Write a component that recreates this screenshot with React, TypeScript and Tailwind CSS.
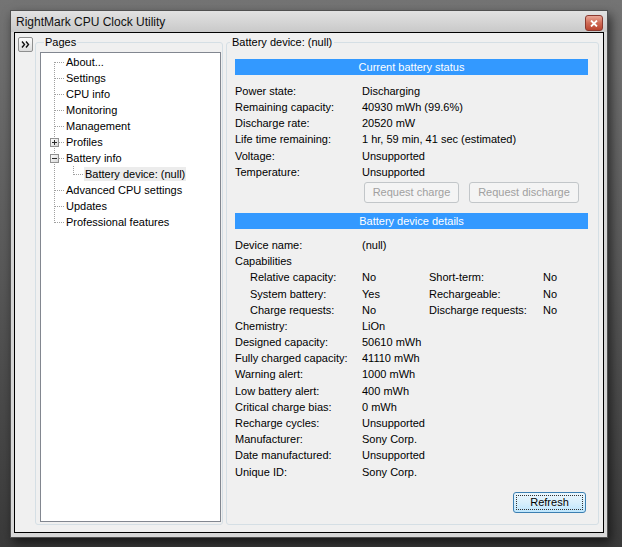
import React from "react";

type V = "full" | "top" | "bottom" | "none";

function Conn({ v, h, box }: { v: V; h: boolean; box?: "+" | "-" }) {
  const y1 = v === "bottom" ? 8 : 0;
  const y2 = v === "top" ? 9 : 16;
  return (
    <svg width="19" height="16" className="shrink-0 block">
      <defs>
        <linearGradient id="bx" x1="0" y1="0" x2="1" y2="1">
          <stop offset="0" stopColor="#ffffff" />
          <stop offset="1" stopColor="#d6d6d6" />
        </linearGradient>
      </defs>
      {v !== "none" && (
        <line x1="9.5" y1={y1} x2="9.5" y2={y2} stroke="#a0a0a0" strokeDasharray="1 1" />
      )}
      {h && <line x1={box ? 14 : 10} y1="8.5" x2="19" y2="8.5" stroke="#a0a0a0" strokeDasharray="1 1" />}
      {box && (
        <g>
          <rect x="5.5" y="4.5" width="8" height="8" fill="url(#bx)" stroke="#919191" />
          <line x1="7" y1="8.5" x2="12" y2="8.5" stroke="#2b2b2b" />
          {box === "+" && <line x1="9.5" y1="6" x2="9.5" y2="11" stroke="#2b2b2b" />}
        </g>
      )}
    </svg>
  );
}

type TreeItem = { text: string; v: V; box?: "+" | "-"; child?: boolean; selected?: boolean };

const tree: TreeItem[] = [
  { text: "About...", v: "bottom" },
  { text: "Settings", v: "full" },
  { text: "CPU info", v: "full" },
  { text: "Monitoring", v: "full" },
  { text: "Management", v: "full" },
  { text: "Profiles", v: "full", box: "+" },
  { text: "Battery info", v: "full", box: "-" },
  { text: "Battery device: (null)", v: "full", child: true, selected: true },
  { text: "Advanced CPU settings", v: "full" },
  { text: "Updates", v: "full" },
  { text: "Professional features", v: "top" },
];

function Row({ label, value }: { label: string; value: string }) {
  return (
    <div className="flex h-[16.2px] items-center">
      <span className="w-[127px] shrink-0">{label}</span>
      <span>{value}</span>
    </div>
  );
}

function CapRow({ a, av, b, bv }: { a: string; av: string; b: string; bv: string }) {
  return (
    <div className="flex h-[16.2px] items-center">
      <span className="w-[127px] shrink-0 pl-[15px]">{a}</span>
      <span className="w-[67px] shrink-0">{av}</span>
      <span className="w-[114px] shrink-0">{b}</span>
      <span>{bv}</span>
    </div>
  );
}

function Bar({ children }: { children: React.ReactNode }) {
  return (
    <div className="h-[16px] bg-[#3399ff] text-white text-center leading-[16px]">{children}</div>
  );
}

function DisabledButton({ w, children }: { w: string; children: React.ReactNode }) {
  return (
    <div
      className={`${w} h-[21px] rounded-[3px] border border-[#c2c6c9] bg-[#f4f4f4] text-[#a0a0a0] flex items-center justify-center`}
    >
      {children}
    </div>
  );
}

export default function App() {
  return (
    <div className="w-[622px] h-[547px] overflow-hidden bg-gradient-to-b from-[#747474] via-[#585858] to-[#3a3a3a] pt-[10px] pl-[10px] font-['Liberation_Sans',Arial,sans-serif] text-[11px] text-black">
      <div className="w-[598px] h-[528px] border border-[#505050] bg-gradient-to-b from-[#dadada] via-[#d2d2d2] to-[#d8d8d8] shadow-[3px_5px_10px_rgba(0,0,0,0.6)] flex flex-col">
        {/* title bar */}
        <div className="h-[21px] shrink-0 flex items-start justify-between pl-[5px] pr-[4px] bg-gradient-to-b from-[#e2e2e2] to-[#c9c9c9]">
          <span className="text-[12px] leading-[22px] text-[#111]">RightMark CPU Clock Utility</span>
          <div className="mt-[4px] w-[18px] h-[16px] rounded-[3px] border border-[#8a3a30] bg-gradient-to-b from-[#e9a797] via-[#cf6a55] to-[#b9432f] flex items-center justify-center">
            <svg width="8" height="7" viewBox="0 0 8 7">
              <path d="M1 0.5 L7 6.5 M7 0.5 L1 6.5" stroke="#ffffff" strokeWidth="1.8" />
            </svg>
          </div>
        </div>
        {/* client */}
        <div className="flex-1 mx-[3px] mb-[4px] border border-black bg-[#f0f0f0] flex pl-[3px] pr-[4px] pt-[3px] pb-[7px]">
          <div className="w-[15px] h-[15px] mt-[1px] shrink-0 rounded-[2px] border border-[#8e8f8f] bg-gradient-to-b from-[#fdfdfd] to-[#dcdcdc] flex items-center justify-center">
            <svg width="9" height="7" viewBox="0 0 9 7">
              <path d="M1 0.5 L3.5 3.5 L1 6.5 M5 0.5 L7.5 3.5 L5 6.5" stroke="#111" strokeWidth="1.4" fill="none" />
            </svg>
          </div>
          {/* Pages group */}
          <fieldset className="ml-[2px] w-[188px] shrink-0 border border-[#d5dfe5] rounded-[3px] pl-[4px] pr-[1px] pb-[2px] flex flex-col">
            <legend className="ml-[4px] px-[1px] leading-[13px]">Pages</legend>
            <div className="mt-[3px] flex-1 bg-white border border-[#828790] pt-[1px]">
              {tree.map((it) => (
                <div key={it.text} className="flex h-[16px] items-center pl-[4px]">
                  <Conn v={it.v} h={!it.child} box={it.box} />
                  {it.child && <Conn v="top" h={true} />}
                  <span
                    className={`ml-[1px] px-[1px] leading-[14px] whitespace-nowrap ${it.selected ? "bg-[#ececec]" : ""}`}
                  >
                    {it.text}
                  </span>
                </div>
              ))}
            </div>
          </fieldset>
          {/* Battery device group */}
          <fieldset className="ml-[3px] w-[373px] shrink-0 border border-[#d5dfe5] rounded-[3px] pl-[8px] pr-[10px] flex flex-col">
            <legend className="-ml-[5px] px-[2px] leading-[13px]">Battery device: (null)</legend>
            <div className="mt-[10px]">
              <Bar>Current battery status</Bar>
            </div>
            <div className="mt-[8px]">
              <Row label="Power state:" value="Discharging" />
              <Row label="Remaining capacity:" value="40930 mWh (99.6%)" />
              <Row label="Discharge rate:" value="20520 mW" />
              <Row label="Life time remaining:" value="1 hr, 59 min, 41 sec (estimated)" />
              <Row label="Voltage:" value="Unsupported" />
              <Row label="Temperature:" value="Unsupported" />
            </div>
            <div className="mt-[2px] pl-[129px] flex gap-[10px]">
              <DisabledButton w="w-[95px]">Request charge</DisabledButton>
              <DisabledButton w="w-[110px]">Request discharge</DisabledButton>
            </div>
            <div className="mt-[10px]">
              <Bar>Battery device details</Bar>
            </div>
            <div className="mt-[8px]">
              <Row label="Device name:" value="(null)" />
              <Row label="Capabilities" value="" />
              <CapRow a="Relative capacity:" av="No" b="Short-term:" bv="No" />
              <CapRow a="System battery:" av="Yes" b="Rechargeable:" bv="No" />
              <CapRow a="Charge requests:" av="No" b="Discharge requests:" bv="No" />
              <Row label="Chemistry:" value="LiOn" />
              <Row label="Designed capacity:" value="50610 mWh" />
              <Row label="Fully charged capacity:" value="41110 mWh" />
              <Row label="Warning alert:" value="1000 mWh" />
              <Row label="Low battery alert:" value="400 mWh" />
              <Row label="Critical charge bias:" value="0 mWh" />
              <Row label="Recharge cycles:" value="Unsupported" />
              <Row label="Manufacturer:" value="Sony Corp." />
              <Row label="Date manufactured:" value="Unsupported" />
              <Row label="Unique ID:" value="Sony Corp." />
            </div>
            <div className="mt-[12px] flex justify-end pr-[2px]">
              <div className="w-[73px] h-[21px] rounded-[3px] border border-[#3c7fb1] bg-gradient-to-b from-[#eaf6fd] via-[#d9f0fc] to-[#bee6fd] p-[2px]">
                <div className="w-full h-full border border-dotted border-[#333] flex items-center justify-center">
                  Refresh
                </div>
              </div>
            </div>
          </fieldset>
        </div>
      </div>
    </div>
  );
}
